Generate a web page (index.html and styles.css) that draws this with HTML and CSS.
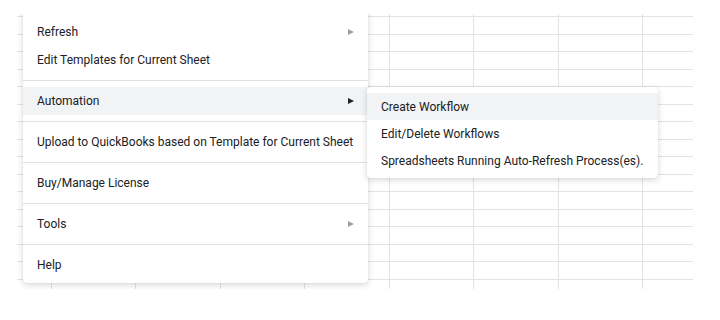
FILE: index.html
```html
<!DOCTYPE html>
<html lang="en">
  <head>
    <meta charset="UTF-8" />
    <meta name="viewport" content="width=device-width, initial-scale=1.0" />
    <title>Add-on Menu</title>
    <link rel="stylesheet" href="styles.css">
  </head>
  <body>
    <div class="sheet">
      <div class="menu main-menu">
        <div class="item">Refresh<span class="arrow"></span></div>
        <div class="item">Edit Templates for Current Sheet</div>
        <div class="sep"></div>
        <div class="item active">Automation<span class="arrow dark"></span></div>
        <div class="sep"></div>
        <div class="item">Upload to QuickBooks based on Template for Current Sheet</div>
        <div class="sep"></div>
        <div class="item">Buy/Manage License</div>
        <div class="sep"></div>
        <div class="item">Tools<span class="arrow"></span></div>
        <div class="sep"></div>
        <div class="item">Help</div>
      </div>

      <div class="menu sub-menu">
        <div class="item active">Create Workflow</div>
        <div class="item">Edit/Delete Workflows</div>
        <div class="item">Spreadsheets Running Auto-Refresh Process(es).</div>
      </div>
    </div>
  </body>
</html>
```

FILE: styles.css
```css
body {
  margin: 0;
  background: #fff;
  font-family: Roboto, "Liberation Sans", sans-serif;
  font-size: 12px;
  color: #202124;
}

.sheet {
  position: relative;
  margin: 14px 0 0 17px;
  width: 676px;
  height: 275px;
  overflow: hidden;
  background-image:
    repeating-linear-gradient(to bottom, #e3e3e3 0 1px, transparent 1px 18px, #e3e3e3 18px 19px, transparent 19px 35px),
    repeating-linear-gradient(to right, #e3e3e3 0 1px, transparent 1px 84.43px);
  background-size: 100% 266px, 100% 100%;
  background-position: 0 2px, 34px 0;
  background-repeat: no-repeat, no-repeat;
}

.menu {
  position: absolute;
  background: #fff;
  border-radius: 4px;
  box-shadow: 0 2px 6px rgba(0, 0, 0, 0.16), 0 0 1px rgba(0, 0, 0, 0.1);
}

.main-menu {
  top: -10px;
  left: 6px;
  width: 345px;
  padding: 14px 0 4px;
}

.sub-menu {
  top: 73px;
  left: 350px;
  width: 291px;
  padding: 6px 0 4px;
}

.item {
  display: flex;
  align-items: center;
  justify-content: space-between;
  height: 28px;
  padding: 0 14px;
  white-space: nowrap;
}

.sub-menu .item {
  height: 27px;
}

.item.active {
  background: #f1f3f4;
}

.sep {
  height: 1px;
  margin: 6px 0;
  background: #e0e0e0;
}

.arrow {
  width: 0;
  height: 0;
  border-left: 6px solid #9aa0a6;
  border-top: 3.5px solid transparent;
  border-bottom: 3.5px solid transparent;
}

.arrow.dark {
  border-left-color: #202124;
}
```
